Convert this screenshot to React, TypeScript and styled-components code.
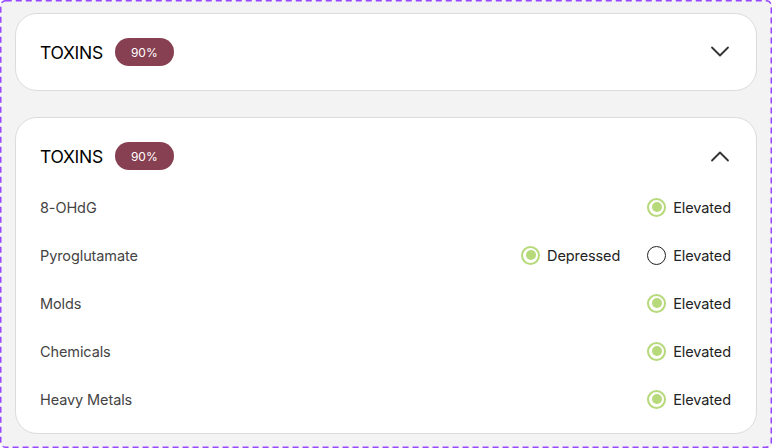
import React, { useState } from "react";
import styled, { createGlobalStyle } from "styled-components";

const Global = createGlobalStyle`
  html, body { margin: 0; padding: 0; }
  body { font-family: "Inter", "Liberation Sans", sans-serif; background: #fff; }
`;

const Frame = styled.div`
  position: relative;
  box-sizing: border-box;
  width: 772px;
  height: 448px;
  border-radius: 6px;
  background: #f3f3f3;
  padding: 13px 15px;
  display: flex;
  flex-direction: column;
  gap: 26px;
`;

const DashedOutline = styled.svg`
  position: absolute;
  inset: 0;
  width: 772px;
  height: 448px;
  pointer-events: none;
`;

const Card = styled.section`
  background: #fff;
  border: 1px solid #dcdcdc;
  border-radius: 22px;
  padding: 24px 25px 10px 24px;
  display: flex;
  flex-direction: column;
`;

const Header = styled.div<{ $open: boolean }>`
  display: flex;
  align-items: center;
  height: 28px;
  margin-bottom: ${(p) => (p.$open ? "13px" : "14px")};
`;

const Title = styled.h2`
  margin: 0;
  font-size: 17.5px;
  font-weight: 400;
  color: #000;
  letter-spacing: -0.3px;
`;

const Badge = styled.span`
  margin-left: 12px;
  height: 28px;
  width: 59px;
  border-radius: 14px;
  background: #873f52;
  color: #fff;
  font-size: 12px;
  display: inline-flex;
  align-items: center;
  justify-content: center;
`;

const Toggle = styled.button`
  margin-left: auto;
  margin-right: -1px;
  border: none;
  background: none;
  padding: 0;
  width: 24px;
  height: 24px;
  display: flex;
  align-items: center;
  justify-content: center;
  cursor: pointer;
  color: #333;
`;

const Row = styled.div`
  display: flex;
  align-items: center;
  height: 48px;
`;

const Label = styled.span`
  font-size: 14.5px;
  color: #444;
  letter-spacing: -0.1px;
`;

const Options = styled.div`
  margin-left: auto;
  display: flex;
  gap: 27px;
  align-items: center;
`;

const Option = styled.label`
  display: flex;
  align-items: center;
  gap: 7px;
  font-size: 14.5px;
  color: #222;
  letter-spacing: -0.1px;
`;

const Radio = styled.span<{ $on: boolean }>`
  box-sizing: border-box;
  width: 19px;
  height: 19px;
  border-radius: 50%;
  border: ${(p) => (p.$on ? "2px solid #b6d97a" : "1.6px solid #222")};
  display: flex;
  align-items: center;
  justify-content: center;
  &::after {
    content: "";
    width: 10px;
    height: 10px;
    border-radius: 50%;
    background: ${(p) => (p.$on ? "#b6d97a" : "transparent")};
  }
`;

const Chevron = ({ up }: { up: boolean }) => (
  <svg width="20" height="12" viewBox="0 0 20 12" fill="none">
    <path
      d={up ? "M2 10.5 L10 2.5 L18 10.5" : "M2 1.5 L10 9.5 L18 1.5"}
      stroke="#333"
      strokeWidth="1.8"
      strokeLinecap="round"
      strokeLinejoin="round"
    />
  </svg>
);

type Item = { name: string; options: { label: string; on: boolean }[] };

const items: Item[] = [
  { name: "8-OHdG", options: [{ label: "Elevated", on: true }] },
  {
    name: "Pyroglutamate",
    options: [
      { label: "Depressed", on: true },
      { label: "Elevated", on: false },
    ],
  },
  { name: "Molds", options: [{ label: "Elevated", on: true }] },
  { name: "Chemicals", options: [{ label: "Elevated", on: true }] },
  { name: "Heavy Metals", options: [{ label: "Elevated", on: true }] },
];

const Accordion = ({ initial }: { initial: boolean }) => {
  const [open, setOpen] = useState(initial);
  return (
    <Card>
      <Header $open={open}>
        <Title>TOXINS</Title>
        <Badge>90%</Badge>
        <Toggle onClick={() => setOpen(!open)} aria-label="toggle">
          <Chevron up={open} />
        </Toggle>
      </Header>
      {open &&
        items.map((it) => (
          <Row key={it.name}>
            <Label>{it.name}</Label>
            <Options>
              {it.options.map((o) => (
                <Option key={o.label}>
                  <Radio $on={o.on} />
                  {o.label}
                </Option>
              ))}
            </Options>
          </Row>
        ))}
    </Card>
  );
};

export default function App() {
  return (
    <>
      <Global />
      <Frame>
        <DashedOutline viewBox="0 0 772 448">
          <rect
            x="0.75"
            y="0.75"
            width="770.5"
            height="446.5"
            rx="5"
            fill="none"
            stroke="#9747ff"
            strokeWidth="1.5"
            strokeDasharray="6 4"
          />
        </DashedOutline>
        <Accordion initial={false} />
        <Accordion initial={true} />
      </Frame>
    </>
  );
}
